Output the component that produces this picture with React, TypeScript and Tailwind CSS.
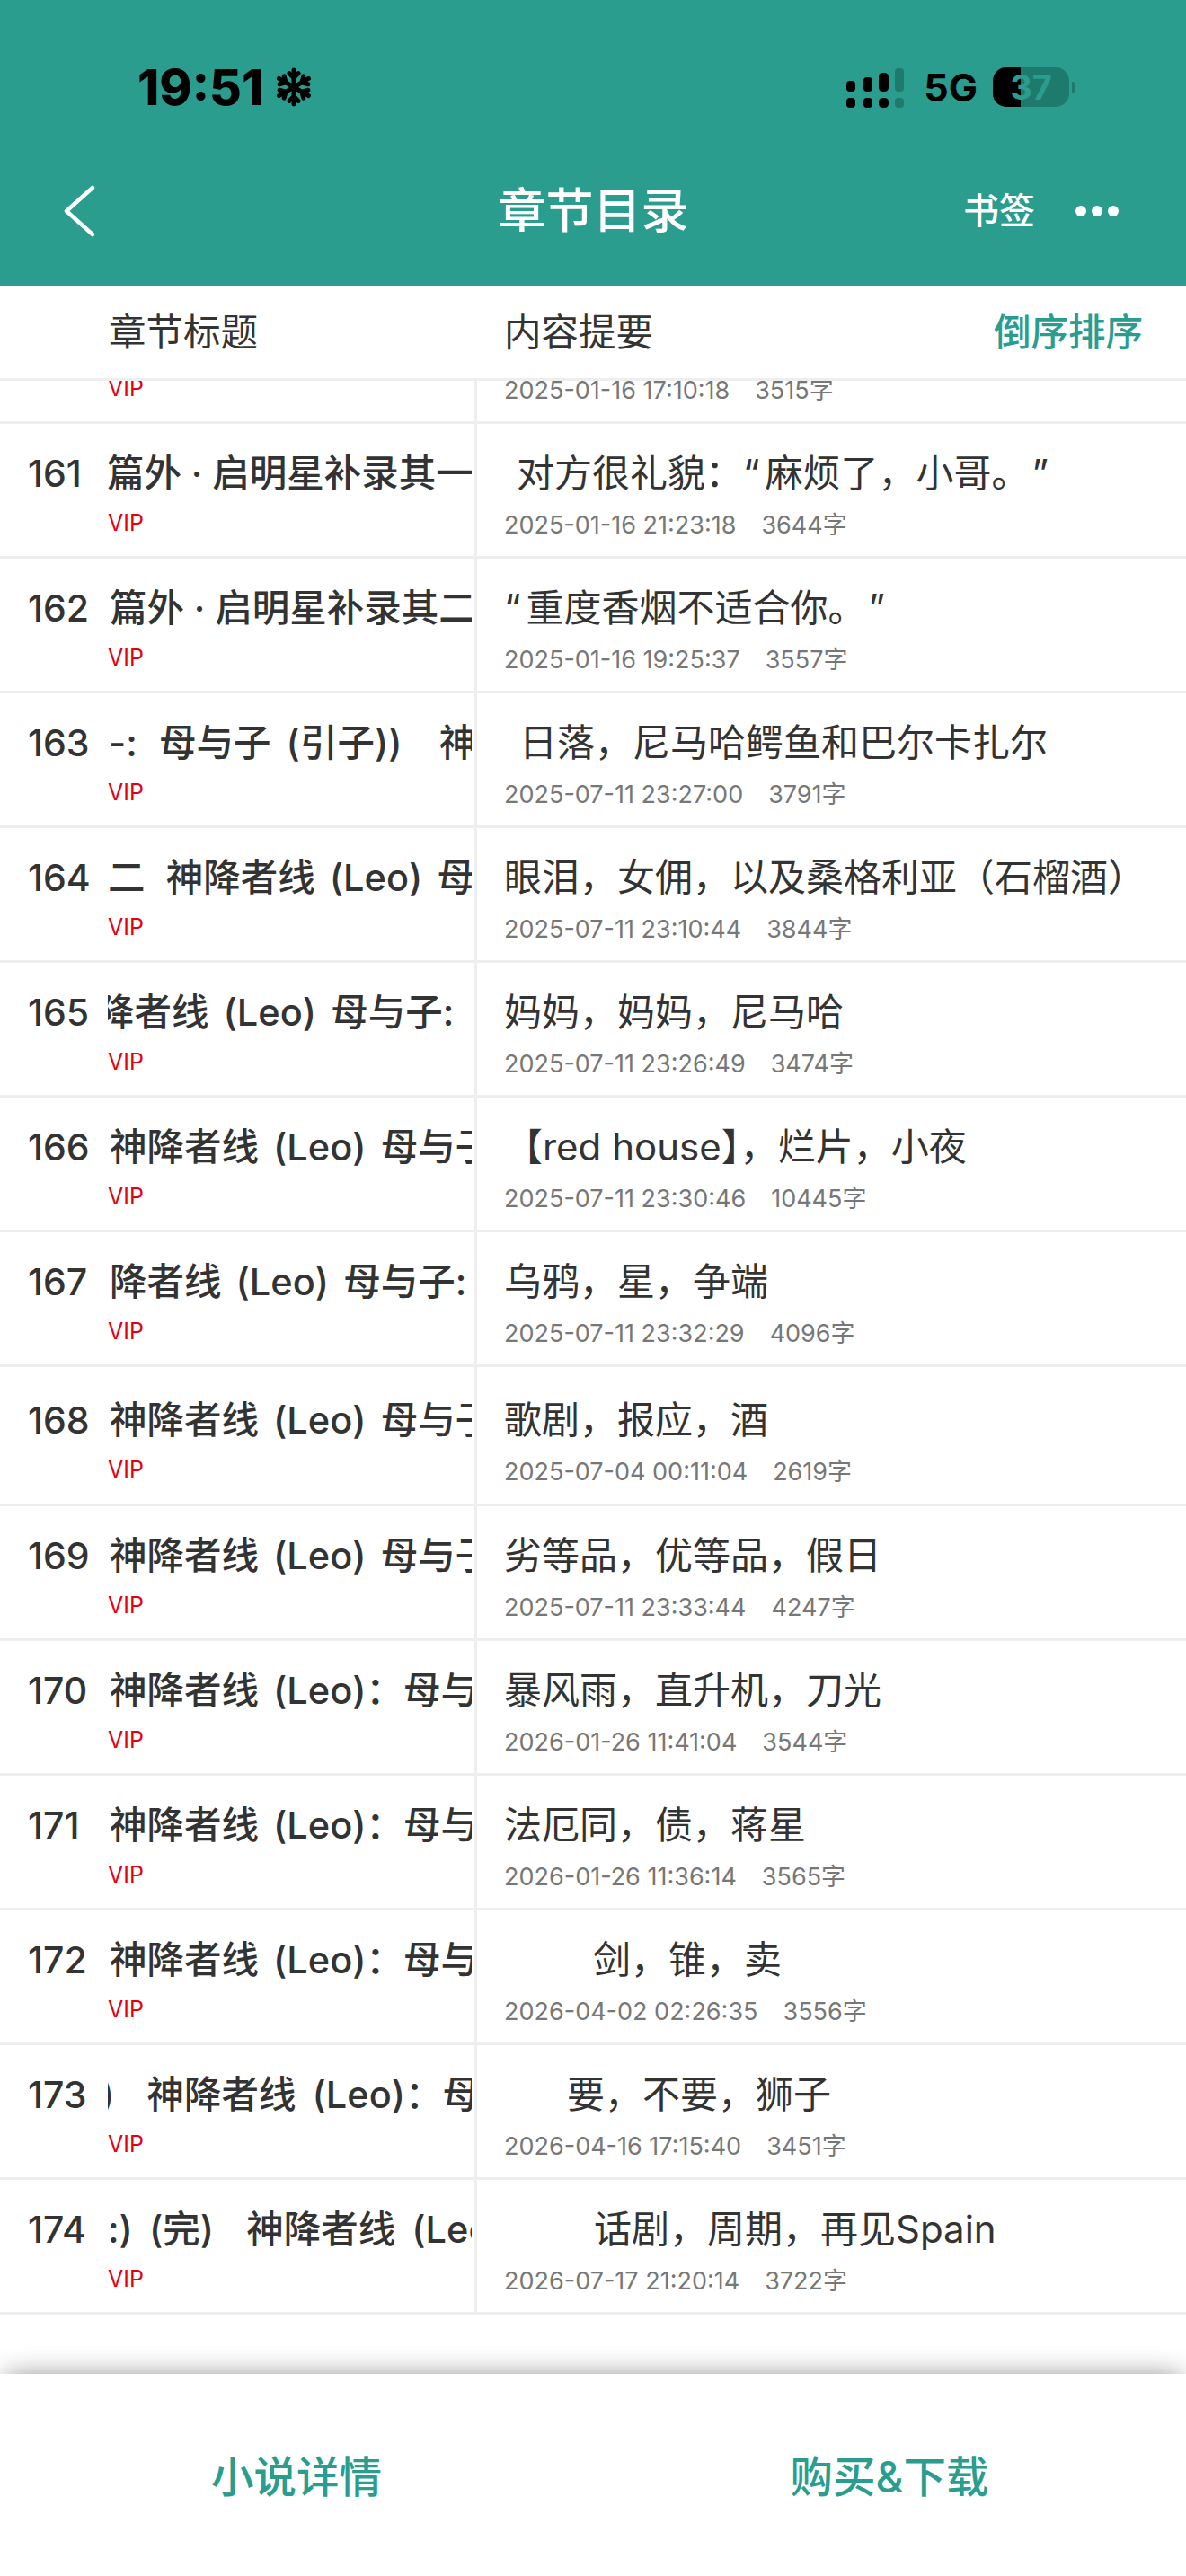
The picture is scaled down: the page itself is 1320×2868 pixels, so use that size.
import type { ReactNode } from "react";

type Row = {
  num: string;
  title: string;
  titleClass: string;
  summary: ReactNode;
  summaryClass: string;
  date: string;
  count: string;
  tall?: boolean;
};

const ROWS: Row[] = [
  { num: "160", title: "篇外\u2009\u200A·\u200A\u2009启明星补录", titleClass: "ml-[2px]", summary: "", summaryClass: "ml-0", date: "2025-01-16 17:10:18", count: "3515字" },
  {
    num: "161",
    title: "篇外\u2009\u200A·\u200A\u2009启明星补录其一",
    titleClass: "-ml-[1px]",
    summary: (
      <>
        {"对方很礼貌\uFF1A"}
        <span className="pr-[6px]">{"\u201C"}</span>
        {"麻烦了\uFF0C小哥。"}
        <span className="pl-[24px]">{"\u201D"}</span>
      </>
    ),
    summaryClass: "ml-[14px]",
    date: "2025-01-16 21:23:18",
    count: "3644字",
  },
  {
    num: "162",
    title: "篇外\u2009\u200A·\u200A\u2009启明星补录其二",
    titleClass: "ml-[2px]",
    summary: (
      <>
        <span className="pr-[6px]">{"\u201C"}</span>
        {"重度香烟不适合你。"}
        <span className="pl-[24px]">{"\u201D"}</span>
      </>
    ),
    summaryClass: "ml-0",
    date: "2025-01-16 19:25:37",
    count: "3557字",
  },
  { num: "163", title: "-: \u2009母与子 (引子))  \u2009神降者线", titleClass: "ml-[1px] [word-spacing:6px]", summary: "日落\uFF0C尼马哈鳄鱼和巴尔卡扎尔", summaryClass: "ml-[17px]", date: "2025-07-11 23:27:00", count: "3791字" },
  { num: "164", title: "二 \u2009神降者线 (Leo) 母与子", titleClass: "ml-0 [word-spacing:5px]", summary: "眼泪\uFF0C女佣\uFF0C以及桑格利亚\uFF08石榴酒\uFF09", summaryClass: "ml-0", date: "2025-07-11 23:10:44", count: "3844字" },
  { num: "165", title: "降者线 (Leo) 母与子:", titleClass: "-ml-[12px] [word-spacing:5px]", summary: "妈妈\uFF0C妈妈\uFF0C尼马哈", summaryClass: "ml-0", date: "2025-07-11 23:26:49", count: "3474字" },
  { num: "166", title: "神降者线 (Leo) 母与子:", titleClass: "ml-[2px] [word-spacing:5px]", summary: "【red house】\uFF0C烂片\uFF0C小夜", summaryClass: "ml-[1px]", date: "2025-07-11 23:30:46", count: "10445字" },
  { num: "167", title: "降者线 (Leo) 母与子:", titleClass: "ml-[2px] [word-spacing:5px]", summary: "乌鸦\uFF0C星\uFF0C争端", summaryClass: "ml-0", date: "2025-07-11 23:32:29", count: "4096字" },
  { num: "168", title: "神降者线 (Leo) 母与子:", titleClass: "ml-[2px] [word-spacing:5px]", summary: "歌剧\uFF0C报应\uFF0C酒", summaryClass: "ml-0", date: "2025-07-04 00:11:04", count: "2619字", tall: true },
  { num: "169", title: "神降者线 (Leo) 母与子:", titleClass: "ml-[2px] [word-spacing:5px]", summary: "劣等品\uFF0C优等品\uFF0C假日", summaryClass: "ml-0", date: "2025-07-11 23:33:44", count: "4247字" },
  { num: "170", title: "神降者线 (Leo)\uFF1A母与子", titleClass: "ml-[2px] [word-spacing:5px]", summary: "暴风雨\uFF0C直升机\uFF0C刀光", summaryClass: "ml-0", date: "2026-01-26 11:41:04", count: "3544字" },
  { num: "171", title: "神降者线 (Leo)\uFF1A母与子", titleClass: "ml-[2px] [word-spacing:5px]", summary: "法厄同\uFF0C债\uFF0C蒋星", summaryClass: "ml-0", date: "2026-01-26 11:36:14", count: "3565字" },
  { num: "172", title: "神降者线 (Leo)\uFF1A母与子", titleClass: "ml-[2px] [word-spacing:5px]", summary: "剑\uFF0C锥\uFF0C卖", summaryClass: "ml-[99px]", date: "2026-04-02 02:26:35", count: "3556字" },
  { num: "173", title: ")  神降者线 (Leo)\uFF1A母与", titleClass: "-ml-[8px] [word-spacing:7px]", summary: "要\uFF0C不要\uFF0C狮子", summaryClass: "ml-[70px]", date: "2026-04-16 17:15:40", count: "3451字" },
  { num: "174", title: ":) (完)  神降者线 (Leo)", titleClass: "ml-0 [word-spacing:7px]", summary: "话剧\uFF0C周期\uFF0C再见Spain", summaryClass: "ml-[100px]", date: "2026-07-17 21:20:14", count: "3722字" },
];

function SnowflakeIcon() {
  return (
    <svg width="44" height="46" viewBox="0 0 24 24" fill="none" stroke="#000" strokeWidth="2.7" strokeLinecap="round" className="shrink-0">
      {[0, 60, 120, 180, 240, 300].map((deg) => (
        <g key={deg} transform={`rotate(${deg} 12 12)`}>
          <path d="M12 12V1.6" />
          <path d="M9.2 3.6L12 6.4L14.8 3.6" />
        </g>
      ))}
    </svg>
  );
}

function SignalIcon() {
  return (
    <svg width="66" height="46" viewBox="0 0 66 46" className="shrink-0">
      <g fill="#000">
        <rect x="0" y="16" width="10" height="12" rx="4" />
        <rect x="19" y="12" width="10" height="16" rx="4" />
        <rect x="36" y="7" width="11" height="21" rx="4.5" />
        <rect x="0" y="35" width="10" height="11" rx="4" />
        <rect x="19" y="35" width="10" height="11" rx="4" />
        <rect x="36" y="35" width="11" height="11" rx="4.5" />
      </g>
      <g fill="#1f7a6e">
        <rect x="54" y="2" width="10" height="26" rx="4" />
        <rect x="54" y="35" width="10" height="11" rx="4" />
      </g>
    </svg>
  );
}

function Battery() {
  return (
    <div className="flex items-center gap-[3px]">
      <div className="relative w-[85px] h-[44px] rounded-[15px] bg-[#1f7a6e] overflow-hidden">
        <div className="absolute left-0 top-0 bottom-0 w-[31px] bg-black" />
        <div className="absolute inset-0 flex items-center justify-center text-[38px] font-bold leading-none text-[#2a9d8f]">
          37
        </div>
      </div>
      <div className="w-[4px] h-[13px] rounded-r-full bg-[#1f7a6e]" />
    </div>
  );
}

function ChapterRow({ row, first }: { row: Row; first: boolean }) {
  return (
    <div
      className={
        "flex border-b-[3px] border-[#eeeeee] " +
        (row.tall ? "h-[155px] " : "h-[150px] ") +
        (first ? "-mt-[102px]" : "")
      }
    >
      <div
        className={
          "w-[531px] shrink-0 border-r-[3px] border-[#eeeeee] flex flex-col " +
          (row.tall ? "pt-[34px]" : "pt-[30px]")
        }
      >
        <div className="flex h-[50px] items-center">
          <div className="w-[120px] shrink-0 pl-[31px] text-[41px] font-medium text-[#333333] leading-none">
            {row.num}
          </div>
          <div className="w-[405px] overflow-hidden">
            <div
              className={
                "whitespace-pre text-[41.5px] font-medium text-[#333333] leading-[50px] " +
                row.titleClass
              }
            >
              {row.title}
            </div>
          </div>
        </div>
        <div className="mt-[15px] h-[30px] pl-[120px] text-[25px] text-[#e60012] leading-[30px]">
          VIP
        </div>
      </div>
      <div
        className={
          "flex-1 min-w-0 pl-[30px] flex flex-col " +
          (row.tall ? "pt-[34px]" : "pt-[30px]")
        }
      >
        <div
          className={
            "h-[50px] whitespace-pre text-[42px] text-[#333333] leading-[50px] " +
            row.summaryClass
          }
        >
          {row.summary}
        </div>
        <div className="mt-[18px] h-[30px] flex gap-[28px] text-[27px] text-[#777777] leading-[30px]">
          <span>{row.date}</span>
          <span>{row.count}</span>
        </div>
      </div>
    </div>
  );
}

export default function App() {
  return (
    <div className="w-[1320px] h-[2868px] flex flex-col bg-white overflow-hidden font-[Inter,'Noto_Sans_CJK_SC',sans-serif]">
      {/* Header */}
      <div className="h-[318px] shrink-0 bg-[#2a9d8f] flex flex-col">
        <div className="h-[173px] pt-[74px] flex items-start justify-between pl-[153px] pr-[123px]">
          <div className="flex items-center h-[46px] gap-[12px]">
            <span className="text-[55px] font-extrabold text-black leading-none">19:51</span>
            <SnowflakeIcon />
          </div>
          <div className="flex items-center h-[46px] gap-[20px]">
            <SignalIcon />
            <span className="text-[43px] font-bold text-black leading-none">5G</span>
            <div className="-ml-[3px]">
              <Battery />
            </div>
          </div>
        </div>
        <div className="h-[124px] grid grid-cols-3 items-center pl-[70px] pr-[75px]">
          <svg width="38" height="58" viewBox="0 0 38 58" fill="none" className="shrink-0">
            <path d="M33 3 L4 29 L33 55" stroke="#ffffff" strokeWidth="4.5" strokeLinecap="round" strokeLinejoin="round" />
          </svg>
          <div className="ml-[6px] text-center text-[53px] font-medium text-white leading-none">章节目录</div>
          <div className="flex items-center justify-end gap-[45px]">
            <span className="text-[40px] font-medium text-white leading-none">书签</span>
            <div className="flex gap-[6px]">
              <div className="w-[12px] h-[12px] rounded-full bg-white" />
              <div className="w-[12px] h-[12px] rounded-full bg-white" />
              <div className="w-[12px] h-[12px] rounded-full bg-white" />
            </div>
          </div>
        </div>
      </div>

      {/* Table header */}
      <div className="h-[106px] shrink-0 flex items-center border-b-[3px] border-[#eeeeee] pt-[3px] pr-[48px] relative z-10 bg-white">
        <div className="w-[561px] pl-[121px] text-[41.5px] text-[#333333] leading-none">章节标题</div>
        <div className="flex-1 text-[41.5px] text-[#333333] leading-none">内容提要</div>
        <div className="text-[41.5px] font-medium text-[#2a9d8f] leading-none">倒序排序</div>
      </div>

      {/* Chapter list */}
      <div className="flex-1 min-h-0 overflow-hidden">
        {ROWS.map((row, i) => (
          <ChapterRow key={row.num} row={row} first={i === 0} />
        ))}
      </div>

      {/* Footer */}
      <div className="h-[225px] shrink-0 grid grid-cols-2 items-center bg-white pt-[4px] relative shadow-[0_-4px_28px_-6px_rgba(0,0,0,0.45)]">
        <div className="text-center text-[47.5px] font-medium text-[#2a9d8f] leading-none">小说详情</div>
        <div className="text-center text-[47.5px] font-medium text-[#2a9d8f] leading-none">购买&下载</div>
      </div>
    </div>
  );
}
